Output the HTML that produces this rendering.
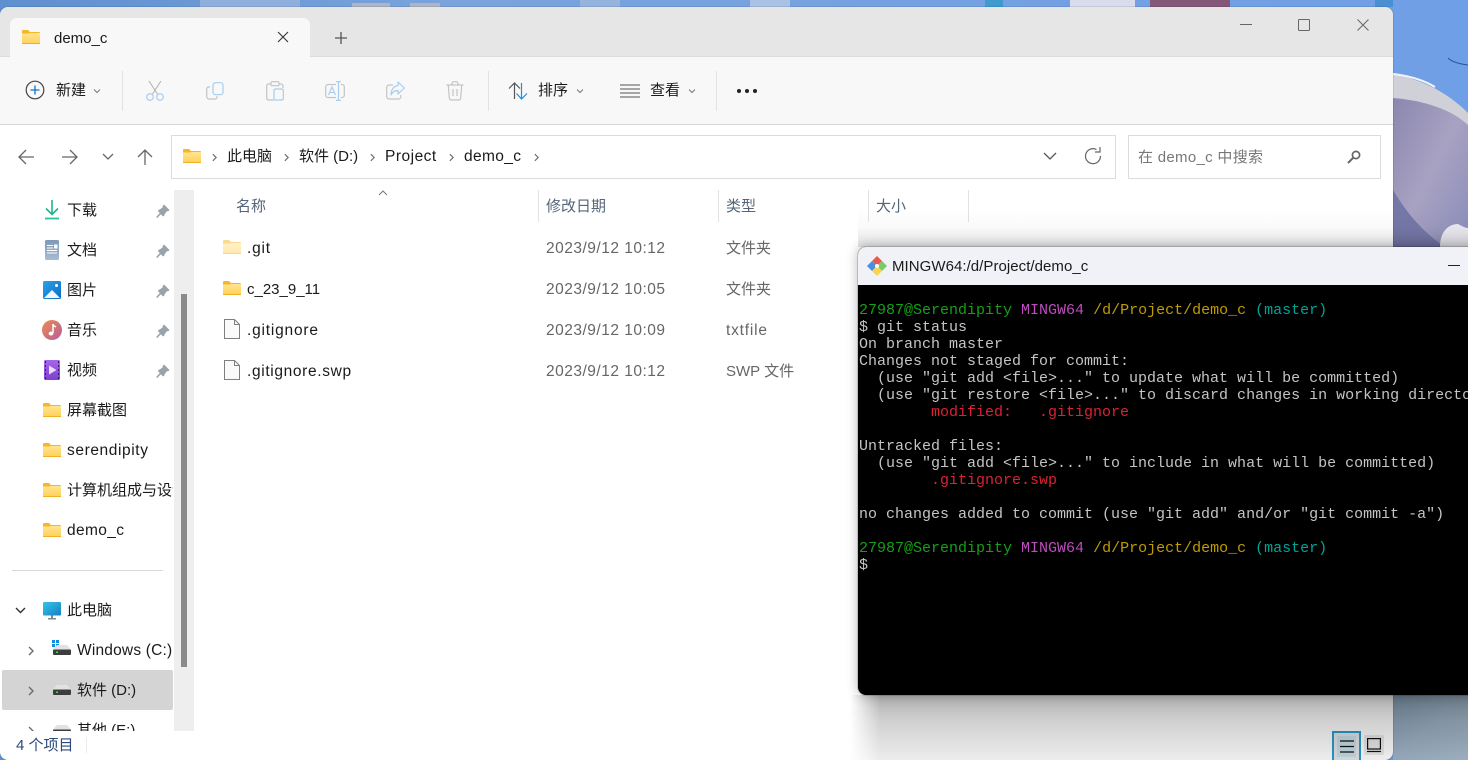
<!DOCTYPE html>
<html lang="zh">
<head>
<meta charset="utf-8">
<title>demo_c</title>
<style>
html,body{margin:0;padding:0;width:1468px;height:760px;overflow:hidden;background:#6f9fe0}
body{position:relative;font-family:"Liberation Sans","Noto Sans CJK SC",sans-serif;font-size:15px;color:#1a1a1a}
.a{position:absolute}
.t{position:absolute;line-height:20px;white-space:nowrap;margin-top:1px}
.l{font-size:15.5px;letter-spacing:.5px}
.l2{font-size:15.5px;letter-spacing:.8px}
svg{position:absolute;overflow:visible}
.date{color:#666}
.hd{color:#55657a}
pre{margin:0;font-family:"Liberation Mono","DejaVu Sans Mono",monospace;font-size:15px;line-height:17px;color:#c4c4c4}
.g{color:#16a016}.m{color:#bf4cbf}.y{color:#bf9c00}.c{color:#00a397}.r{color:#dc2233}
</style>
</head>
<body>
<svg width="0" height="0" style="position:absolute">
<defs>
<linearGradient id="fg" x1="0" y1="0" x2="0" y2="1"><stop offset="0" stop-color="#ffe592"/><stop offset="1" stop-color="#ffd055"/></linearGradient>
<symbol id="folder" viewBox="0 0 18 14"><path d="M0 1a1 1 0 0 1 1-1h5l2 2h9a1 1 0 0 1 1 1v2H0z" fill="#f8b526"/><path d="M0 3.500h7l1-.5h10v10a1 1 0 0 1-1 1H1a1 1 0 0 1-1-1z" fill="url(#fg)"/><path d="M0 13.500h18" stroke="#f0b02c" stroke-width="1"/></symbol>
<symbol id="file" viewBox="0 0 16 20"><path d="M.5.5h10l5 5v14H.5z" fill="#fafafa" stroke="#7f7f7f"/><path d="M10.5.5v5h5" fill="none" stroke="#7f7f7f"/></symbol>
<symbol id="pin" viewBox="0 0 14 14"><path d="M8 .5 13.500 6 12 7.500 11 7 8.500 10.500V11.500L7 12.500 1.800 7 3 5.500H3.800L7 3 6.500 2z" fill="#98a3ab"/><path d="M4.500 9.500 .7 13.500" stroke="#98a3ab" stroke-width="1.600"/></symbol>
<symbol id="drive" viewBox="0 0 18 10"><path d="M4 0h10l4 4.500H0z" fill="#e2e2e2"/><rect y="4.500" width="18" height="5.500" rx="1" fill="#3d3d3d"/><rect x="3" y="6.500" width="2" height="1.500" fill="#46d64a"/></symbol>
<symbol id="chev" viewBox="0 0 6 10"><path d="M1 1l4 4-4 4" fill="none" stroke="#6b6b6b" stroke-width="1.400"/></symbol>
</defs>
</svg>

<!-- wallpaper -->
<svg class="a" style="left:0;top:0" width="1468" height="760" viewBox="0 0 1468 760">
<defs>
<linearGradient id="sky" x1="0" y1="0" x2="1" y2="0"><stop offset="0" stop-color="#5e8fcf"/><stop offset=".3" stop-color="#7aa3dc"/><stop offset="1" stop-color="#6f9fe6"/></linearGradient>
<linearGradient id="bowl" x1="0" y1="0" x2="1" y2="1"><stop offset="0" stop-color="#8a86ae"/><stop offset=".5" stop-color="#a8a2c2"/><stop offset="1" stop-color="#8a8cba"/></linearGradient>
<linearGradient id="low" x1="0" y1="0" x2="1" y2="1"><stop offset="0" stop-color="#8aa2b8"/><stop offset=".5" stop-color="#9fb3c6"/><stop offset="1" stop-color="#a9bccd"/></linearGradient>
</defs>
<rect width="1468" height="760" fill="url(#sky)"/>
<rect x="200" y="0" width="100" height="7" fill="#8fb0dc"/><rect x="580" y="0" width="40" height="7" fill="#94b4de"/><rect x="750" y="0" width="40" height="7" fill="#a9c2e6"/>
<rect x="352" y="3" width="38" height="4" fill="#aeb6c6"/><rect x="410" y="3" width="30" height="4" fill="#aeb6c6"/>
<rect x="985" y="0" width="18" height="7" fill="#3f9ad0"/><rect x="1070" y="0" width="65" height="7" fill="#d8dcec"/><rect x="1150" y="0" width="80" height="7" fill="#85587a"/><rect x="1375" y="0" width="18" height="7" fill="#4a8fd0"/>
<path d="M1393 74C1425 80 1450 95 1468 113V247H1393z" fill="#d0d0d8"/>
<path d="M1393 74C1410 76 1425 81 1435 87" fill="none" stroke="#f4f4f8" stroke-width="2"/>
<path d="M1393 98C1420 100 1450 108 1468 125V247H1393z" fill="url(#bowl)"/>
<path d="M1393 247V190C1405 210 1420 230 1445 247z" fill="#7577a8"/>
<path d="M1440 247C1440 232 1448 224 1458 224 1462 226 1465 228 1468 228V247z" fill="#e9e9ef"/>
<path d="M1448 58C1452 62 1460 64 1468 65" fill="none" stroke="#2a5590" stroke-width="1"/>
<rect x="1393" y="695" width="75" height="65" fill="url(#low)"/>
</svg>

<!-- explorer window -->
<div class="a" style="left:0;top:7px;width:1393px;height:753px;background:#fff;border-radius:8px;overflow:hidden;box-shadow:0 0 1px rgba(0,0,0,.55)"></div>
<div class="a" style="left:0;top:7px;width:1393px;height:50px;background:#e6e6e6;border-radius:8px 8px 0 0"></div>
<div class="a" style="left:10px;top:18px;width:300px;height:39px;background:#f8f8f8;border-radius:7px 7px 0 0"></div>
<div class="a" style="left:0;top:57px;width:1393px;height:67px;background:#f8f8f8;border-top:0"></div>
<div class="a" style="left:0;top:56px;width:10px;height:1px;background:#dcdcdc"></div>
<div class="a" style="left:310px;top:56px;width:1083px;height:1px;background:#dcdcdc"></div>
<div class="a" style="left:0;top:124px;width:1393px;height:1px;background:#d6d6d6"></div>

<!-- tab -->
<svg style="left:22px;top:30px" width="18" height="14"><use href="#folder"/></svg>
<div class="t" style="left:54px;top:28px">demo_c</div>
<svg style="left:277px;top:31px" width="12" height="12" viewBox="0 0 12 12"><path d="M1 1l10 10M11 1 1 11" stroke="#333" stroke-width="1.100" fill="none"/></svg>
<svg style="left:335px;top:32px" width="12" height="12" viewBox="0 0 12 12"><path d="M6 0v12M0 6h12" stroke="#555" stroke-width="1.300" fill="none"/></svg>

<!-- window controls -->
<div class="a" style="left:1240px;top:24px;width:12px;height:1px;background:#666"></div>
<div class="a" style="left:1298px;top:19px;width:10px;height:10px;border:1.300px solid #666;border-radius:1.500px"></div>
<svg style="left:1357px;top:19px" width="12" height="12" viewBox="0 0 12 12"><path d="M.5.5l11 11M11.500.5l-11 11" stroke="#666" stroke-width="1" fill="none"/></svg>

<!-- toolbar -->
<svg style="left:25px;top:80px" width="20" height="20" viewBox="0 0 20 20"><circle cx="10" cy="10" r="8.800" fill="none" stroke="#444" stroke-width="1.200"/><path d="M10 5.500v9M5.500 10h9" stroke="#0b74d0" stroke-width="1.300"/></svg>
<div class="t" style="left:56px;top:80px">新建</div>
<svg style="left:93px;top:88px" width="8" height="6" viewBox="0 0 8 6"><path d="M1 1.500l3 3 3-3" fill="none" stroke="#777"/></svg>
<div class="a" style="left:122px;top:71px;width:1px;height:40px;background:#e2e2e2"></div>
<!-- scissors -->
<svg style="left:146px;top:81px" width="18" height="20" viewBox="0 0 18 20"><path d="M3 0l8.500 13M15 0 6.500 13" fill="none" stroke="#b4b4b4" stroke-width="1.100"/><circle cx="4" cy="16" r="3.300" fill="none" stroke="#a5cdf0" stroke-width="1.200"/><circle cx="14" cy="16" r="3.300" fill="none" stroke="#a5cdf0" stroke-width="1.200"/></svg>
<!-- copy -->
<svg style="left:206px;top:82px" width="18" height="18" viewBox="0 0 18 18"><path d="M4 5H2.500A1.800 1.800 0 0 0 .7 6.800v7.500A2.500 2.500 0 0 0 3.200 17H9a2 2 0 0 0 2-2v-1" fill="none" stroke="#c4c4c4" stroke-width="1.200"/><rect x="7" y=".7" width="10" height="12" rx="2.500" fill="#f8f8f8" stroke="#a5cdf0" stroke-width="1.200"/></svg>
<!-- paste -->
<svg style="left:266px;top:81px" width="18" height="20" viewBox="0 0 18 20"><path d="M5 3H2.500A1.800 1.800 0 0 0 .7 4.800v12.400A2 2 0 0 0 2.700 19H8M13 3h2a2 2 0 0 1 2 2v2" fill="none" stroke="#c4c4c4" stroke-width="1.200"/><rect x="5" y=".7" width="8" height="4" rx="1" fill="none" stroke="#c4c4c4" stroke-width="1.100"/><rect x="8" y="8" width="9.300" height="11" rx="1.500" fill="#f8f8f8" stroke="#a5cdf0" stroke-width="1.200"/></svg>
<!-- rename -->
<svg style="left:325px;top:81px" width="20" height="20" viewBox="0 0 20 20"><path d="M11 3.500H3A2.300 2.300 0 0 0 .7 5.800v8.400A2.300 2.300 0 0 0 3 16.500h8M16 3.500h1a2.300 2.300 0 0 1 2.300 2.300v8.400a2.300 2.300 0 0 1-2.300 2.300h-1" fill="none" stroke="#c4c4c4" stroke-width="1.200"/><path d="M3.500 14 7 6l3.500 8M5 11.500h4" fill="none" stroke="#a5cdf0" stroke-width="1.100"/><path d="M11 .7h5M13.500.7v18.600M11 19.300h5" fill="none" stroke="#a5cdf0" stroke-width="1.200"/></svg>
<!-- share -->
<svg style="left:386px;top:81px" width="19" height="19" viewBox="0 0 19 19"><path d="M7 4H3A2.300 2.300 0 0 0 .7 6.300v9.400A2.300 2.300 0 0 0 3 18h9.500a2.300 2.300 0 0 0 2.300-2.300V14" fill="none" stroke="#c4c4c4" stroke-width="1.200"/><path d="M12 1l6.300 6-6.300 6V9.500C8.500 9.500 6.500 11 5 14c0-5 2.500-9 7-9.500z" fill="none" stroke="#a5cdf0" stroke-width="1.200" stroke-linejoin="round"/></svg>
<!-- trash -->
<svg style="left:446px;top:81px" width="18" height="20" viewBox="0 0 18 20"><path d="M.5 4h17M6 4V2.500A1.800 1.800 0 0 1 7.800.7h2.400A1.800 1.800 0 0 1 12 2.500V4M2.300 4l1 13a2 2 0 0 0 2 2h7.400a2 2 0 0 0 2-2l1-13M7 8v7M11 8v7" fill="none" stroke="#c4c4c4" stroke-width="1.200"/></svg>
<div class="a" style="left:488px;top:71px;width:1px;height:40px;background:#e2e2e2"></div>
<!-- sort -->
<svg style="left:508px;top:82px" width="20" height="18" viewBox="0 0 20 18"><path d="M6.500 17V1M1 6.500l5.500-5.500L12 6.500" fill="none" stroke="#555" stroke-width="1.200"/><path d="M13.500 1v16M8.500 11.500l5 5.500 5.500-5.500" fill="none" stroke="#1e8fe0" stroke-width="1.200"/></svg>
<div class="t" style="left:538px;top:80px">排序</div>
<svg style="left:576px;top:88px" width="8" height="6" viewBox="0 0 8 6"><path d="M1 1.500l3 3 3-3" fill="none" stroke="#777"/></svg>
<!-- view -->
<svg style="left:620px;top:84px" width="20" height="14" viewBox="0 0 20 14"><path d="M0 1h20M0 5h20M0 9h20M0 13h20" stroke="#555" stroke-width="1"/></svg>
<div class="t" style="left:650px;top:80px">查看</div>
<svg style="left:688px;top:88px" width="8" height="6" viewBox="0 0 8 6"><path d="M1 1.500l3 3 3-3" fill="none" stroke="#777"/></svg>
<div class="a" style="left:716px;top:71px;width:1px;height:40px;background:#e2e2e2"></div>
<svg style="left:737px;top:89px" width="20" height="4" viewBox="0 0 20 4"><circle cx="2" cy="2" r="2" fill="#222"/><circle cx="10" cy="2" r="2" fill="#222"/><circle cx="18" cy="2" r="2" fill="#222"/></svg>

<!-- nav -->
<svg style="left:18px;top:149px" width="16" height="16" viewBox="0 0 16 16"><path d="M16 8H1M8 1 1 8l7 7" fill="none" stroke="#666" stroke-width="1.300"/></svg>
<svg style="left:62px;top:149px" width="16" height="16" viewBox="0 0 16 16"><path d="M0 8h15M8 1l7 7-7 7" fill="none" stroke="#666" stroke-width="1.300"/></svg>
<svg style="left:102px;top:153px" width="12" height="7" viewBox="0 0 12 7"><path d="M1 1l5 5 5-5" fill="none" stroke="#666" stroke-width="1.300"/></svg>
<svg style="left:137px;top:149px" width="16" height="16" viewBox="0 0 16 16"><path d="M8 16V1M1 8l7-7 7 7" fill="none" stroke="#666" stroke-width="1.300"/></svg>

<!-- address -->
<div class="a" style="left:171px;top:135px;width:943px;height:42px;background:#fff;border:1px solid #dcdcdc"></div>
<svg style="left:183px;top:149px" width="18" height="14"><use href="#folder"/></svg>
<svg style="left:212px;top:153px" width="5" height="9"><use href="#chev"/></svg>
<div class="t" style="left:227px;top:146px">此电脑</div>
<svg style="left:284px;top:153px" width="5" height="9"><use href="#chev"/></svg>
<div class="t" style="left:299px;top:146px">软件 (D:)</div>
<svg style="left:370px;top:153px" width="5" height="9"><use href="#chev"/></svg>
<div class="t l" style="left:385px;top:146px">Project</div>
<svg style="left:449px;top:153px" width="5" height="9"><use href="#chev"/></svg>
<div class="t" style="left:464px;top:146px;font-size:15.500px;letter-spacing:.36px">demo_c</div>
<svg style="left:534px;top:153px" width="5" height="9"><use href="#chev"/></svg>
<svg style="left:1043px;top:152px" width="14" height="8" viewBox="0 0 14 8"><path d="M1 1l6 6 6-6" fill="none" stroke="#555" stroke-width="1.300"/></svg>
<svg style="left:1084px;top:147px" width="18" height="18" viewBox="0 0 18 18"><path d="M12.500 2.500A7.500 7.500 0 1 0 16.500 9" fill="none" stroke="#666" stroke-width="1.200"/><path d="M16 0v5h-5" fill="none" stroke="#666" stroke-width="1.200"/></svg>
<!-- search -->
<div class="a" style="left:1128px;top:135px;width:251px;height:42px;background:#fff;border:1px solid #dcdcdc"></div>
<div class="t" style="left:1138px;top:147px;color:#777;letter-spacing:.3px">在 demo_c 中搜索</div>
<svg style="left:1347px;top:150px" width="14" height="14" viewBox="0 0 14 14"><circle cx="9" cy="5" r="3.600" fill="none" stroke="#666" stroke-width="1.700"/><path d="M6.300 7.700 1 13" stroke="#666" stroke-width="2"/></svg>

<!-- sidebar -->
<svg style="left:45px;top:200px" width="14" height="20" viewBox="0 0 14 20"><path d="M7 0v14M1 8.500l6 6 6-6" fill="none" stroke="#1fb48f" stroke-width="1.600"/><path d="M0 18.500h14" stroke="#2cc0a0" stroke-width="1.800"/></svg>
<div class="t" style="left:67px;top:200px">下载</div>
<svg style="left:156px;top:204px" width="14" height="14"><use href="#pin"/></svg>

<svg style="left:45px;top:240px" width="14" height="20" viewBox="0 0 14 20"><defs><linearGradient id="dc" x1="0" y1="0" x2="0" y2="1"><stop offset="0" stop-color="#7e99b8"/><stop offset="1" stop-color="#a8bcd0"/></linearGradient></defs><rect width="14" height="20" rx="1.500" fill="url(#dc)"/><path d="M2 5.500h6M2 8h6M2 10.500h10M2 13h10" stroke="#fff" stroke-width="1"/><rect x="9" y="4.500" width="3.500" height="4" fill="#fff"/></svg>
<div class="t" style="left:67px;top:240px">文档</div>
<svg style="left:156px;top:244px" width="14" height="14"><use href="#pin"/></svg>

<svg style="left:43px;top:281px" width="18" height="18" viewBox="0 0 18 18"><defs><linearGradient id="pc" x1="0" y1="0" x2="1" y2="1"><stop offset="0" stop-color="#29a3e8"/><stop offset="1" stop-color="#0b6cc6"/></linearGradient></defs><rect width="18" height="18" rx="1.500" fill="url(#pc)"/><circle cx="13.500" cy="4.500" r="1.500" fill="#fff"/><path d="M1 17 9 9l8 8z" fill="#f2f6fb"/></svg>
<div class="t" style="left:67px;top:280px">图片</div>
<svg style="left:156px;top:284px" width="14" height="14"><use href="#pin"/></svg>

<svg style="left:42px;top:320px" width="20" height="20" viewBox="0 0 20 20"><defs><linearGradient id="mc" x1="0" y1="0" x2="1" y2="1"><stop offset="0" stop-color="#ee8a4f"/><stop offset="1" stop-color="#b45f9e"/></linearGradient></defs><circle cx="10" cy="10" r="10" fill="url(#mc)"/><path d="M11 4v9" stroke="#fff" stroke-width="1.500"/><path d="M11 4c.5 2 2 2.500 3 3" stroke="#fff" stroke-width="1.300" fill="none"/><ellipse cx="9" cy="13.500" rx="2.400" ry="2" fill="#fff"/></svg>
<div class="t" style="left:67px;top:320px">音乐</div>
<svg style="left:156px;top:324px" width="14" height="14"><use href="#pin"/></svg>

<svg style="left:44px;top:360px" width="16" height="20" viewBox="0 0 16 20"><defs><linearGradient id="vc" x1="0" y1="0" x2="0" y2="1"><stop offset="0" stop-color="#a566e8"/><stop offset="1" stop-color="#7d3fd0"/></linearGradient></defs><rect width="16" height="20" rx="1.500" fill="url(#vc)"/><path d="M1 2h1M1 6h1M1 10h1M1 14h1M1 18h1M14 2h1M14 6h1M14 10h1M14 14h1M14 18h1" stroke="#3a1a70" stroke-width="2"/><path d="M5 5.500 12.500 10 5 14.500z" fill="#e9dcfa"/></svg>
<div class="t" style="left:67px;top:360px">视频</div>
<svg style="left:156px;top:364px" width="14" height="14"><use href="#pin"/></svg>

<svg style="left:43px;top:403px" width="18" height="14"><use href="#folder"/></svg>
<div class="t" style="left:67px;top:400px">屏幕截图</div>
<svg style="left:43px;top:443px" width="18" height="14"><use href="#folder"/></svg>
<div class="t" style="left:67px;top:440px;font-size:15.500px;letter-spacing:.6px">serendipity</div>
<svg style="left:43px;top:483px" width="18" height="14"><use href="#folder"/></svg>
<div class="a" style="left:67px;top:480px;width:106px;height:23px;overflow:hidden"><div class="t" style="left:0;top:0">计算机组成与设计</div></div>
<svg style="left:43px;top:523px" width="18" height="14"><use href="#folder"/></svg>
<div class="t" style="left:67px;top:520px;font-size:15.500px;letter-spacing:.36px">demo_c</div>
<div class="a" style="left:12px;top:570px;width:151px;height:1px;background:#d8d8d8"></div>

<svg style="left:15px;top:607px" width="11" height="7" viewBox="0 0 11 7"><path d="M1 1l4.500 4.500L10 1" fill="none" stroke="#333" stroke-width="1.400"/></svg>
<svg style="left:43px;top:602px" width="18" height="18" viewBox="0 0 18 18"><defs><linearGradient id="pcg" x1="0" y1="0" x2="1" y2="1"><stop offset="0" stop-color="#35c6e6"/><stop offset="1" stop-color="#137fc4"/></linearGradient></defs><rect width="18" height="13.500" rx="1" fill="url(#pcg)"/><rect x="8" y="13.500" width="2" height="3" fill="#7d8a95"/><rect x="5" y="16" width="8" height="1.500" fill="#7d8a95"/></svg>
<div class="t" style="left:67px;top:600px">此电脑</div>

<svg style="left:28px;top:646px" width="6" height="10"><use href="#chev"/></svg>
<svg style="left:52px;top:640px" width="7" height="7" viewBox="0 0 7 7"><path d="M0 0h3v3H0zM4 0h3v3H4zM0 4h3v3H0zM4 4h3v3H4z" fill="#0f8fdf"/></svg>
<svg style="left:53px;top:645px" width="18" height="10"><use href="#drive"/></svg>
<div class="t" style="left:77px;top:640px;font-size:15.500px;letter-spacing:.2px">Windows (C:)</div>

<div class="a" style="left:2px;top:670px;width:171px;height:40px;background:#d4d4d4;border-radius:2px"></div>
<svg style="left:28px;top:686px" width="6" height="10"><use href="#chev"/></svg>
<svg style="left:53px;top:685px" width="18" height="10"><use href="#drive"/></svg>
<div class="t" style="left:77px;top:680px">软件 (D:)</div>

<div class="a" style="left:0;top:711px;width:174px;height:20px;overflow:hidden">
<svg style="left:28px;top:15px" width="6" height="10"><use href="#chev"/></svg>
<svg style="left:53px;top:14px" width="18" height="10"><use href="#drive"/></svg>
<div class="t" style="left:77px;top:9px">其他 (E:)</div>
</div>

<!-- sidebar scrollbar -->
<div class="a" style="left:174px;top:190px;width:20px;height:541px;background:#eeeeee"></div>
<div class="a" style="left:181px;top:294px;width:6px;height:373px;background:#8a8a8a"></div>

<!-- column headers -->
<svg style="left:378px;top:190px" width="10" height="6" viewBox="0 0 10 6"><path d="M1 5l4-4 4 4" fill="none" stroke="#777"/></svg>
<div class="t hd" style="left:236px;top:196px">名称</div>
<div class="a" style="left:538px;top:190px;width:1px;height:32px;background:#e2e2e2"></div>
<div class="t hd" style="left:546px;top:196px">修改日期</div>
<div class="a" style="left:718px;top:190px;width:1px;height:32px;background:#e2e2e2"></div>
<div class="t hd" style="left:726px;top:196px">类型</div>
<div class="a" style="left:868px;top:190px;width:1px;height:32px;background:#e2e2e2"></div>
<div class="t hd" style="left:876px;top:196px">大小</div>
<div class="a" style="left:968px;top:190px;width:1px;height:32px;background:#e2e2e2"></div>

<!-- rows -->
<svg style="left:223px;top:240px;opacity:.5" width="18" height="14"><use href="#folder"/></svg>
<div class="t l2" style="left:247px;top:238px">.git</div>
<div class="t date l" style="left:546px;top:238px">2023/9/12 10:12</div>
<div class="t date" style="left:726px;top:238px">文件夹</div>

<svg style="left:223px;top:281px" width="18" height="14"><use href="#folder"/></svg>
<div class="t" style="left:247px;top:279px">c_23_9_11</div>
<div class="t date l" style="left:546px;top:279px">2023/9/12 10:05</div>
<div class="t date" style="left:726px;top:279px">文件夹</div>

<svg style="left:224px;top:319px" width="16" height="20"><use href="#file"/></svg>
<div class="t l2" style="left:247px;top:320px">.gitignore</div>
<div class="t date l" style="left:546px;top:320px">2023/9/12 10:09</div>
<div class="t date l2" style="left:726px;top:320px">txtfile</div>

<svg style="left:224px;top:360px" width="16" height="20"><use href="#file"/></svg>
<div class="t" style="left:247px;top:361px;font-size:15.500px;letter-spacing:.65px">.gitignore.swp</div>
<div class="t date l" style="left:546px;top:361px">2023/9/12 10:12</div>
<div class="t date" style="left:726px;top:361px">SWP 文件</div>

<!-- status bar -->
<div class="t" style="left:16px;top:735px;color:#2a4a78">4 个项目</div>
<div class="a" style="left:86px;top:737px;width:1px;height:16px;background:#ececec"></div>
<div class="a" style="left:1364px;top:735px;width:20px;height:20px;background:#e9e9e9;border-radius:2px"></div>
<svg style="left:1367px;top:738px" width="14" height="14" viewBox="0 0 14 14"><rect x=".6" y=".6" width="12.800" height="10.400" fill="none" stroke="#111" stroke-width="1.200"/><path d="M0 13.500h14" stroke="#111" stroke-width="1.200"/></svg>

<!-- selected view button -->
<div class="a" style="left:1332px;top:731px;width:25px;height:27px;border:2px solid #2e9bd0;border-bottom:0;box-sizing:content-box;background:#c8dde8;box-shadow:inset 0 0 0 3px #e2e6e8"></div>
<svg style="left:1340px;top:740px" width="14" height="14" viewBox="0 0 14 14"><path d="M0 1h14M0 6.500h14M0 12h14" stroke="#111" stroke-width="1.200"/></svg>

<!-- terminal shadows -->
<div class="a" style="left:858px;top:207px;width:610px;height:40px;background:linear-gradient(to bottom,rgba(0,0,0,0),rgba(0,0,0,.02) 50%,rgba(0,0,0,.12))"></div>
<div class="a" style="left:850px;top:695px;width:618px;height:65px;background:linear-gradient(to bottom,rgba(0,0,0,.31),rgba(0,0,0,.19) 38%,rgba(0,0,0,.07));-webkit-mask-image:linear-gradient(to right,transparent,#000 30px);mask-image:linear-gradient(to right,transparent,#000 30px)"></div>

<!-- terminal -->
<div class="a" style="left:858px;top:247px;width:640px;height:448px;background:#000;border-radius:8px;box-shadow:0 0 12px rgba(0,0,0,.3),0 0 0 1px rgba(0,0,0,.15)"></div>
<div class="a" style="left:858px;top:247px;width:640px;height:38px;background:#f0f2f8;border-radius:8px 8px 0 0"></div>
<svg style="left:867px;top:256px" width="20" height="20" viewBox="0 0 20 20"><path d="M10 0 15 5 10 10 5 5z" fill="#e8584c"/><path d="M5 5l5 5-5 5-5-5z" fill="#4a90e2"/><path d="M15 5l5 5-5 5-5-5z" fill="#7cc96b"/><path d="M10 10l5 5-5 5-5-5z" fill="#f6d64f"/><circle cx="10" cy="10" r="2" fill="#fff"/></svg>
<div class="t" style="left:892px;top:256px;font-size:15px;letter-spacing:.05px">MINGW64:/d/Project/demo_c</div>
<div class="a" style="left:1448px;top:265px;width:12px;height:1px;background:#222"></div>

<pre class="a" style="left:859px;top:302px"><span class="g">27987@Serendipity</span> <span class="m">MINGW64</span> <span class="y">/d/Project/demo_c</span> <span class="c">(master)</span>
$ git status
On branch master
Changes not staged for commit:
  (use "git add &lt;file&gt;..." to update what will be committed)
  (use "git restore &lt;file&gt;..." to discard changes in working directory)
        <span class="r">modified:   .gitignore</span>

Untracked files:
  (use "git add &lt;file&gt;..." to include in what will be committed)
        <span class="r">.gitignore.swp</span>

no changes added to commit (use "git add" and/or "git commit -a")

<span class="g">27987@Serendipity</span> <span class="m">MINGW64</span> <span class="y">/d/Project/demo_c</span> <span class="c">(master)</span>
$</pre>
</body>
</html>
